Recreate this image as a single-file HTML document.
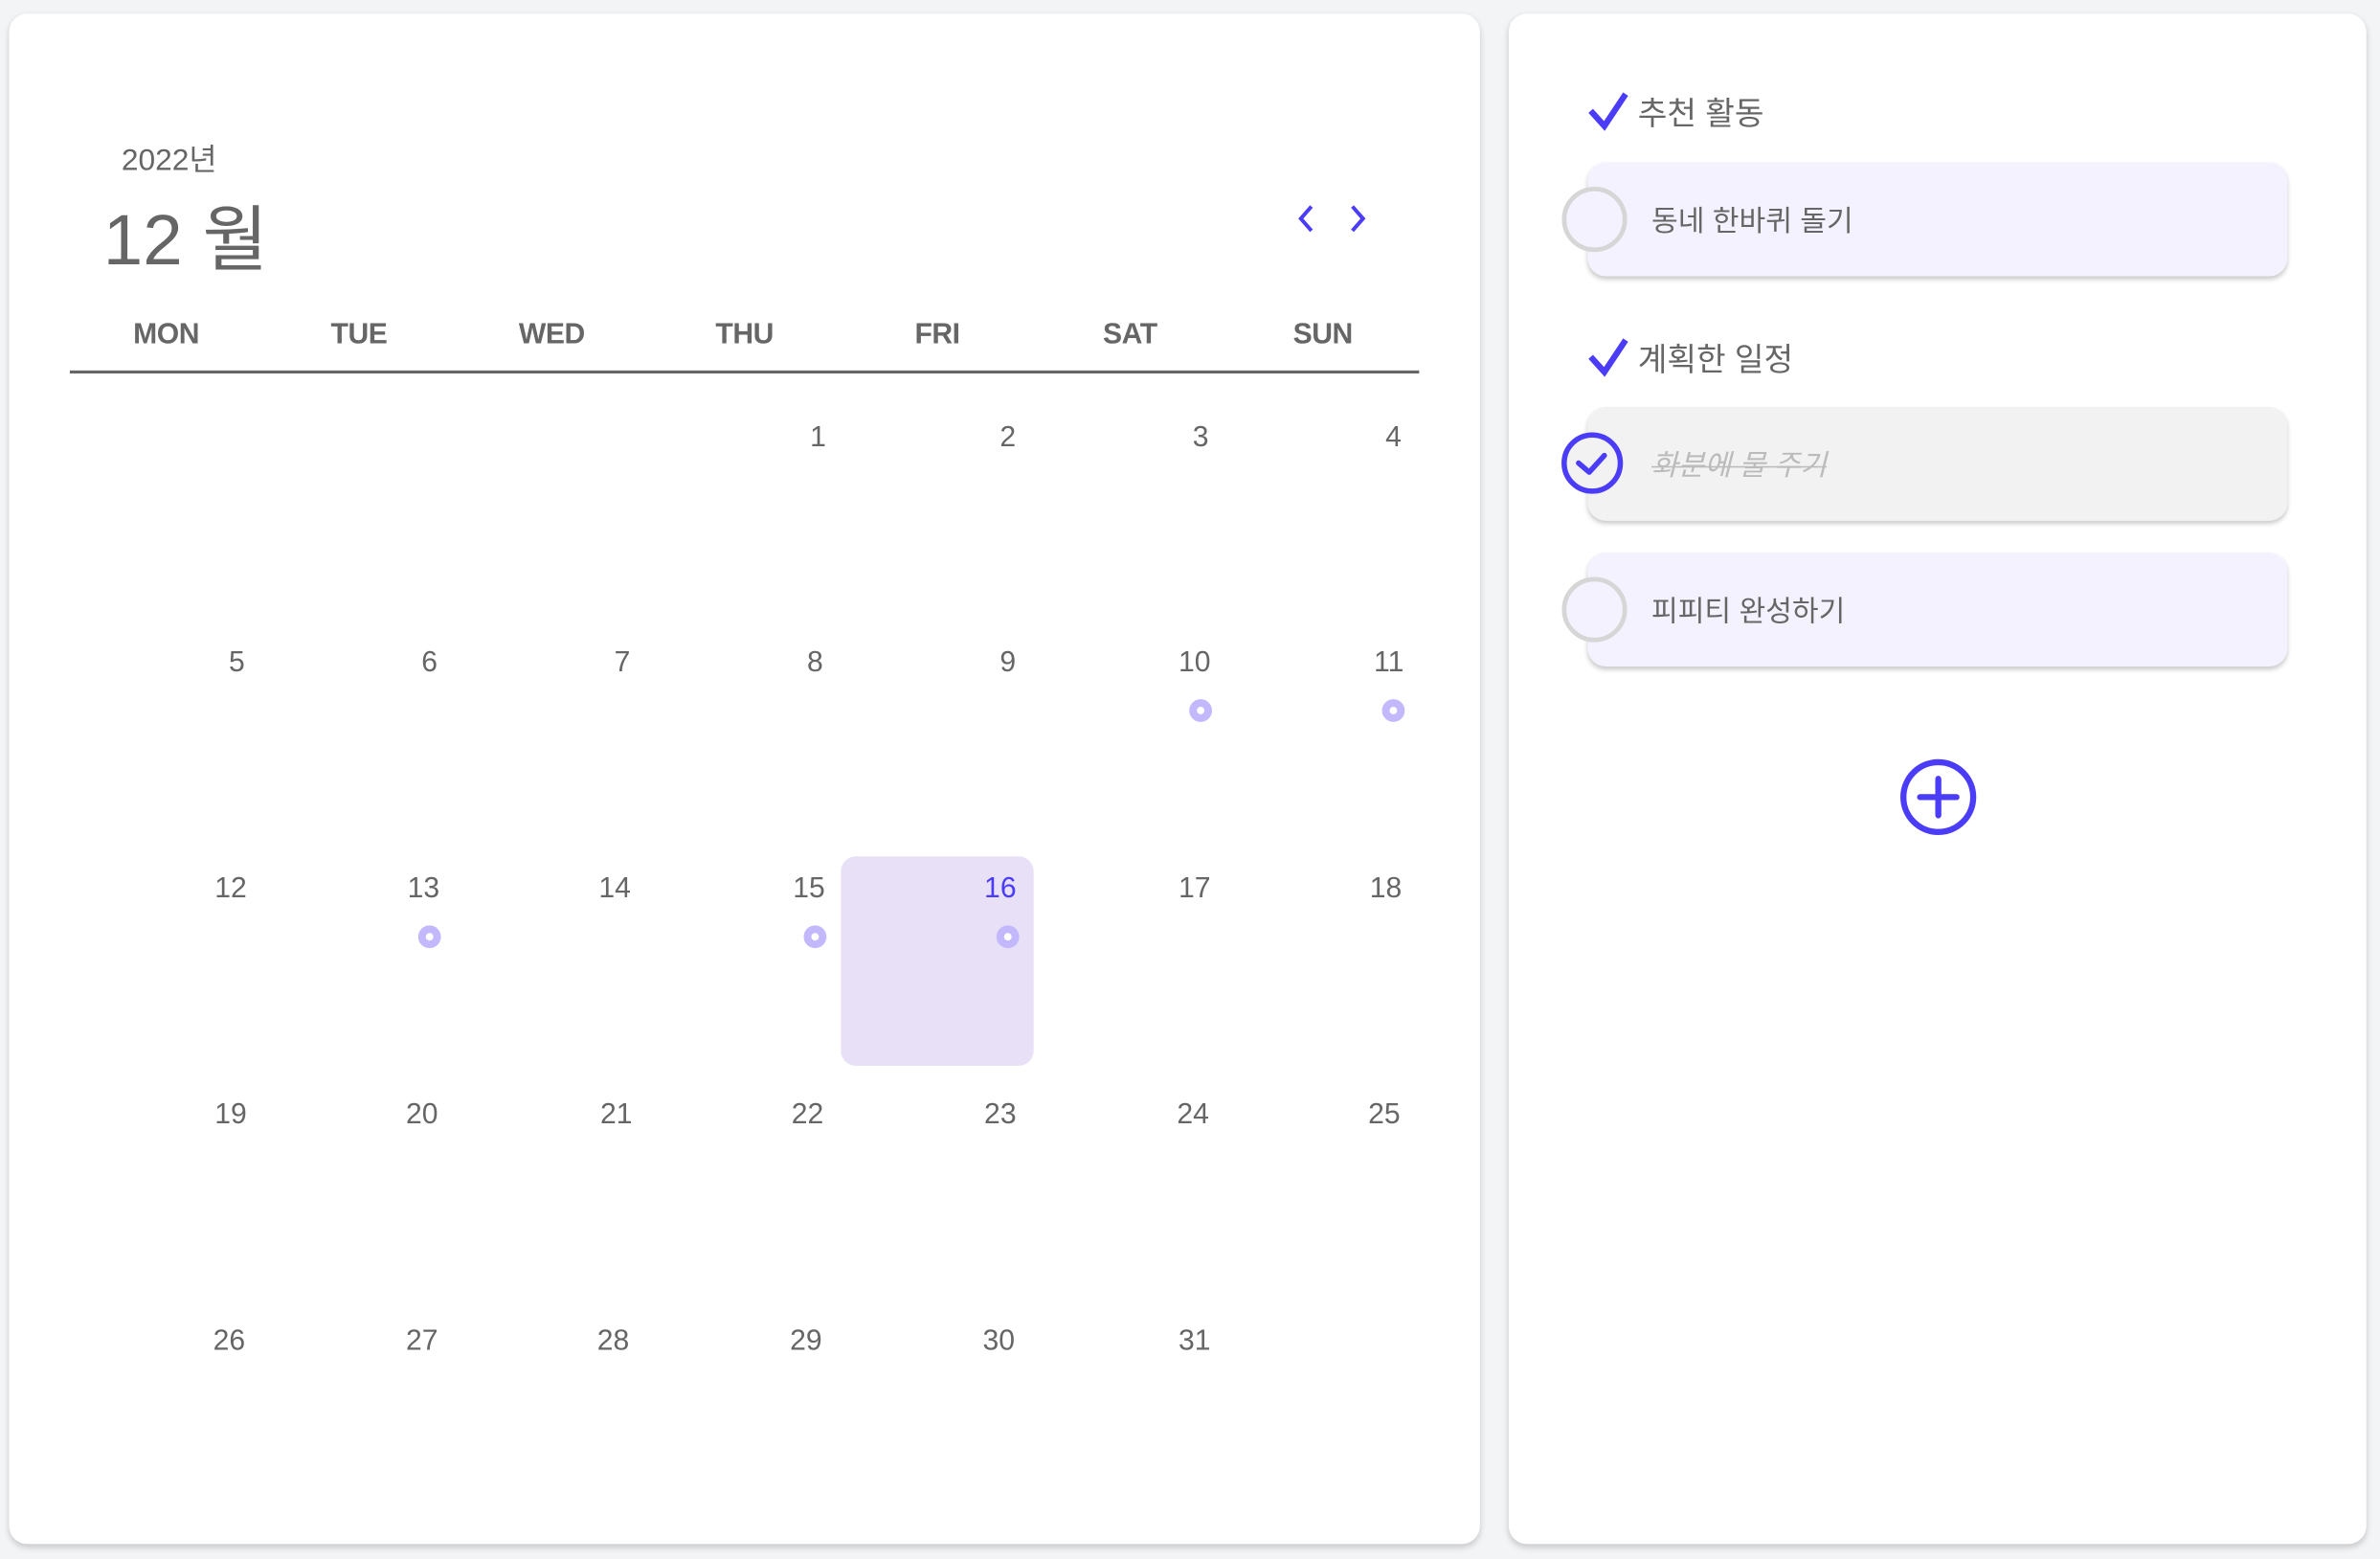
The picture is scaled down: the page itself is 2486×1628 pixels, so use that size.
<!DOCTYPE html>
<html><head><meta charset="utf-8"><style>
html,body{margin:0;padding:0;width:2486px;height:1628px;overflow:hidden;background:#f3f4f6;}
#s{position:absolute;left:0;top:0;width:1568px;height:1027px;transform:scale(1.58546);transform-origin:0 0;font-family:"Liberation Sans","Noto Sans CJK KR",sans-serif;color:#666;}
.card{position:absolute;background:#fff;border-radius:12px;box-shadow:0 2px 4px rgba(0,0,0,.18);}
.a{position:absolute;white-space:nowrap;}
.wd{position:absolute;top:210px;width:127px;text-align:center;font-size:19px;font-weight:bold;color:#666;letter-spacing:-0.3px;}
.num{position:absolute;font-size:19px;color:#666;transform:translateX(-50%);}
.dot{position:absolute;width:5px;height:5px;border:5px solid #c3b8fb;border-radius:50%;background:#fff;transform:translate(-50%,-50%);}
.item{position:absolute;left:1046px;width:461px;height:75px;border-radius:12px;box-shadow:0 2px 3px rgba(0,0,0,.2);}
.circ{position:absolute;left:1029px;width:37px;height:37px;border:3px solid #d6d6d6;border-radius:50%;background:#f3f2fe;}
.it{position:absolute;left:1088px;font-size:19px;color:#666;}
.hd{position:absolute;left:1079px;font-size:21px;color:#666;}
</style></head><body><div id="s">
<div class="card" style="left:6px;top:9px;width:969px;height:1008px;"></div>
<div class="card" style="left:994px;top:9px;width:565px;height:1008px;"></div>

<div class="a" style="left:80px;top:89px;font-size:20px;color:#666;">2022년</div>
<div class="a" style="left:68px;top:119px;font-size:47px;color:#666;">12 월</div>
<svg class="a" style="left:852px;top:134px" width="52" height="22" viewBox="0 0 52 22"><path d="M12 2 L5 10 L12 18" fill="none" stroke="#4a3cf7" stroke-width="2.5"/><path d="M39 2 L46 10 L39 18" fill="none" stroke="#4a3cf7" stroke-width="2.5"/></svg>

<div class="wd" style="left:46px">MON</div><div class="wd" style="left:173px">TUE</div><div class="wd" style="left:300px">WED</div><div class="wd" style="left:427px">THU</div><div class="wd" style="left:554px">FRI</div><div class="wd" style="left:681px">SAT</div><div class="wd" style="left:808px">SUN</div>
<div class="a" style="left:46px;top:244px;width:889px;height:2px;background:#666;"></div>

<div class="a" style="left:554px;top:564px;width:127px;height:138px;background:#e8e0f6;border-radius:10px;"></div>

<div class="num" style="left:539px;top:278px">1</div><div class="num" style="left:664px;top:278px">2</div><div class="num" style="left:791px;top:278px">3</div><div class="num" style="left:918px;top:278px">4</div>
<div class="num" style="left:156px;top:426px">5</div><div class="num" style="left:283px;top:426px">6</div><div class="num" style="left:410px;top:426px">7</div><div class="num" style="left:537px;top:426px">8</div><div class="num" style="left:664px;top:426px">9</div><div class="num" style="left:787px;top:426px">10</div><div class="num" style="left:915px;top:426px">11</div>
<div class="num" style="left:152px;top:575px">12</div><div class="num" style="left:279px;top:575px">13</div><div class="num" style="left:405px;top:575px">14</div><div class="num" style="left:533px;top:575px">15</div><div class="num" style="left:659px;top:575px;color:#4a3cf7">16</div><div class="num" style="left:787px;top:575px">17</div><div class="num" style="left:913px;top:575px">18</div>
<div class="num" style="left:152px;top:724px">19</div><div class="num" style="left:278px;top:724px">20</div><div class="num" style="left:406px;top:724px">21</div><div class="num" style="left:532px;top:724px">22</div><div class="num" style="left:659px;top:724px">23</div><div class="num" style="left:786px;top:724px">24</div><div class="num" style="left:912px;top:724px">25</div>
<div class="num" style="left:151px;top:873px">26</div><div class="num" style="left:278px;top:873px">27</div><div class="num" style="left:404px;top:873px">28</div><div class="num" style="left:531px;top:873px">29</div><div class="num" style="left:658px;top:873px">30</div><div class="num" style="left:787px;top:873px">31</div>

<div class="dot" style="left:791px;top:468px"></div><div class="dot" style="left:918px;top:468px"></div>
<div class="dot" style="left:283px;top:617px"></div><div class="dot" style="left:537px;top:617px"></div><div class="dot" style="left:664px;top:617px"></div>

<svg class="a" style="left:1044px;top:58px" width="32" height="30"><path d="M4 15 L13 25 L27 4" fill="none" stroke="#4a3cf7" stroke-width="4"/></svg>
<div class="hd" style="top:59px">추천 활동</div>
<div class="item" style="top:107px;background:#f3f2fe"></div>
<div class="circ" style="top:123px"></div>
<div class="it" style="top:131px">동네 한바퀴 돌기</div>

<svg class="a" style="left:1044px;top:220px" width="32" height="30"><path d="M4 15 L13 25 L27 4" fill="none" stroke="#4a3cf7" stroke-width="4"/></svg>
<div class="hd" style="top:221px">계획한 일정</div>
<div class="item" style="top:268px;background:#f2f2f2"></div>
<svg class="a" style="left:1028px;top:284px" width="44" height="44"><circle cx="21" cy="21" r="18.5" fill="#f2f2f2" stroke="#4a3cf7" stroke-width="3.5"/><path d="M12 21 L19 27 L29 16" fill="none" stroke="#4a3cf7" stroke-width="3.5" stroke-linecap="round" stroke-linejoin="round"/></svg>
<div class="it" style="top:292px;color:#bbb;font-style:italic;text-decoration:line-through;">화분에 물 주기</div>

<div class="item" style="top:364px;background:#f3f2fe"></div>
<div class="circ" style="top:380px"></div>
<div class="it" style="top:388px">피피티 완성하기</div>

<svg class="a" style="left:1250px;top:498px" width="54" height="54"><circle cx="27" cy="27" r="23" fill="none" stroke="#4a3cf7" stroke-width="4"/><path d="M27 15 V39 M15 27 H39" stroke="#4a3cf7" stroke-width="4" stroke-linecap="round"/></svg>
</div></body></html>
